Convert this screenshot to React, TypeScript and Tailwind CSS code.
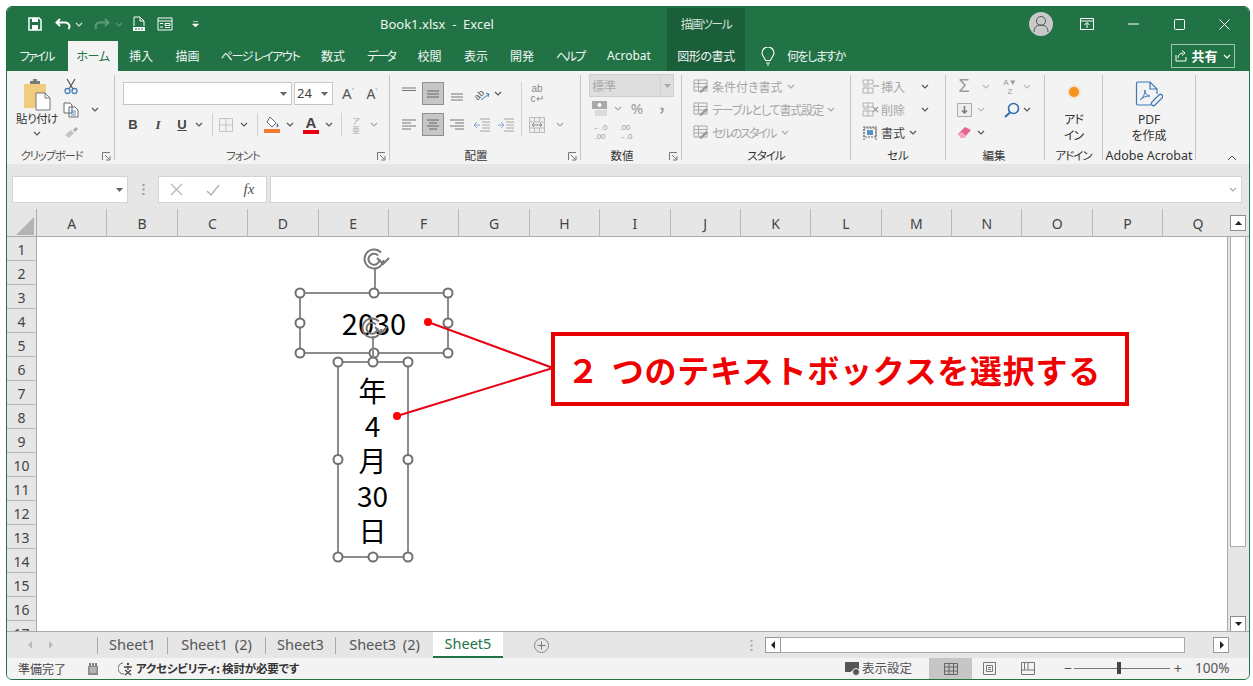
import React from "react";

const columns = ["A", "B", "C", "D", "E", "F", "G", "H", "I", "J", "K", "L", "M", "N", "O", "P", "Q"];
const rows = [1, 2, 3, 4, 5, 6, 7, 8, 9, 10, 11, 12, 13, 14, 15, 16, 17];

function Chev({ color = "#555" }: { color?: string }) {
  return (
    <svg width="8" height="5" viewBox="0 0 8 5">
      <path d="M1 1l3 3 3-3" fill="none" stroke={color} strokeWidth="1.2" />
    </svg>
  );
}

function Caret({ color = "#666", up }: { color?: string; up?: boolean }) {
  return (
    <svg width="7" height="4" viewBox="0 0 7 4">
      <path d={up ? "M0 4h7L3.5 0z" : "M0 0h7L3.5 4z"} fill={color} />
    </svg>
  );
}

function Launcher() {
  return (
    <svg width="9" height="9" viewBox="0 0 9 9">
      <path d="M.5 8V.5H8M3 3l4.5 4.5M4 8h4V4" fill="none" stroke="#777" strokeWidth="1" />
    </svg>
  );
}

function Lines({ kind, color = "#777" }: { kind: "l" | "c" | "r" | "t" | "m" | "b"; color?: string }) {
  const d: Record<string, string> = {
    l: "M1 3h14M1 6h9M1 9h14M1 12h9",
    c: "M2 3h12M4 6h8M2 9h12M4 12h8",
    r: "M1 3h14M6 6h9M1 9h14M6 12h9",
    t: "M1 2h14M1 4.5h14",
    m: "M2 5h12M2 8h12M2 11h12",
    b: "M2 8h12M2 11h12M2 14h12",
  };
  return (
    <svg width="16" height="16" viewBox="0 0 16 16">
      <path d={d[kind]} fill="none" stroke={color} strokeWidth="1" />
    </svg>
  );
}

function Group({ w, label, launcher, dark, labelClass = "", children }: { w: string; label: string; launcher?: boolean; dark?: boolean; labelClass?: string; children: React.ReactNode }) {
  return (
    <div className={`${w} h-[85px] shrink-0 border-r border-[#c6c6c6]`}>
      <div className="h-[72px] flow-root">{children}</div>
      <div className={`h-[18px] flex items-center relative ${launcher ? "pr-[18px]" : ""}`}>
        <span className={`w-full text-center text-[11.5px] whitespace-nowrap ${dark ? "text-[#333]" : "text-[#555]"} ${labelClass}`}>{label}</span>
        {launcher && (
          <span className="absolute right-[3px] top-[5px] flex">
            <Launcher />
          </span>
        )}
      </div>
    </div>
  );
}

function Slot({ className, children }: { className: string; children?: React.ReactNode }) {
  return <div className={`flex items-center justify-center shrink-0 ${className}`}>{children}</div>;
}

function StyleIcon() {
  return (
    <svg width="16" height="15" viewBox="0 0 16 15">
      <path d="M1 1h13v11H1zM1 4.5h13M1 8h13M5.5 1v11" fill="none" stroke="#a8a8a8" strokeWidth="1" />
      <path d="M6 13l7-7 2 2-7 6z" fill="#999" />
    </svg>
  );
}

function CellIcon({ kind }: { kind: "ins" | "del" | "fmt" }) {
  if (kind === "fmt") {
    return (
      <svg width="16" height="16" viewBox="0 0 16 16">
        <path d="M2 3h12v9H2zM2 1v14M14 1v14M5 1v2M8 1v2M11 1v2" fill="none" stroke="#666" strokeWidth="1" strokeDasharray="2 1" />
        <path d="M5 5h6v5H5z" fill="#5b8fc7" />
      </svg>
    );
  }
  return (
    <svg width="18" height="16" viewBox="0 0 18 16">
      <path d="M1 1h10v4H1zM1 9h10v5H1zM6 1v4M6 9v5M1 7h6" fill="none" stroke="#b0b0b0" strokeWidth="1" />
      {kind === "ins" ? <path d="M11 7h6" stroke="#b0b0b0" strokeWidth="1.5" /> : <path d="M11 5l5 5M16 5l-5 5" stroke="#999" strokeWidth="1.2" />}
    </svg>
  );
}

function Rotate({ x, y }: { x: number; y: number }) {
  return (
    <g transform={`translate(${x} ${y})`} fill="none" stroke="#777">
      <path d="M7 -6.500A9.500 9.500 0 1 0 9.500 1" strokeWidth="2" />
      <path d="M4 -3.500A5.500 5.500 0 1 0 5.500 0" strokeWidth="2" />
      <path d="M3 -1l6 6 6-6" strokeWidth="2" />
    </g>
  );
}

function Frame({ x, y, w, h }: { x: number; y: number; w: number; h: number }) {
  const pts = [
    [x, y],
    [x + w / 2, y],
    [x + w, y],
    [x, y + h / 2],
    [x + w, y + h / 2],
    [x, y + h],
    [x + w / 2, y + h],
    [x + w, y + h],
  ];
  return (
    <g>
      <rect x={x} y={y} width={w} height={h} fill="none" stroke="#8c8c8c" strokeWidth="2" />
      {pts.map((p, i) => (
        <circle key={i} cx={p[0]} cy={p[1]} r="4.5" fill="#fff" stroke="#707070" strokeWidth="2" />
      ))}
    </g>
  );
}

function Shapes() {
  return (
    <div className="absolute inset-0 pointer-events-none">
      <div className="absolute left-[300px] top-[293px] w-[148px] h-[60px] flex items-center justify-center text-[29px] leading-none text-black pb-[1px]">2030</div>
      <div className="absolute left-[338px] top-[373px] w-[70px] flex flex-col items-center text-[28px] leading-[35px] text-black pr-[1px]">
        <span>年</span>
        <span>4</span>
        <span>月</span>
        <span>30</span>
        <span>日</span>
      </div>
      <svg className="absolute left-0 top-0" width="1253" height="686" viewBox="0 0 1253 686">
        <path d="M375 268V293" stroke="#8c8c8c" strokeWidth="2" />
        <Rotate x={374} y={259} />
        <Frame x={300} y={293} w={148} h={60} />
        <path d="M373 336V362" stroke="#8c8c8c" strokeWidth="2" />
        <Rotate x={372} y={328} />
        <Frame x={338} y={362} w={70} h={195} />
        <path d="M428 322L553 368L397 416" fill="none" stroke="#e60012" strokeWidth="2" />
        <circle cx="428" cy="322" r="4" fill="#f00" />
        <circle cx="397" cy="416" r="4" fill="#f00" />
      </svg>
      <div className="absolute left-[551px] top-[332px] w-[578px] h-[74px] pr-[12px] bg-white border-[4px] border-[#e60000] flex items-center justify-center">
        <span className="text-[32px] leading-none font-bold tracking-[0.75px] text-[#f00000] whitespace-nowrap [font-feature-settings:normal]">
          <span className="mr-[12px]">２</span>つのテキストボックスを選択する
        </span>
      </div>
    </div>
  );
}

export default function App() {
  return (
    <div className="relative w-[1253px] h-[686px] bg-white overflow-hidden font-['Noto_Sans_CJK_JP','Noto_Sans',sans-serif] [font-feature-settings:'palt']">
      <div className="absolute left-[6px] top-[6px] w-[1244px] h-[674px] flex flex-col rounded-[6px] overflow-hidden border border-[#217346] bg-[#e6e6e6]">
        {/* title bar */}
        <div className="h-[34px] shrink-0 flex bg-[#217346] text-white items-center">
          <Slot className="w-[18px] h-[18px] ml-[19px]">
            <svg width="14" height="14" viewBox="0 0 14 14">
              <path d="M1 1h10l2 2v10H1z" fill="none" stroke="#fff" strokeWidth="1.5" />
              <path d="M4 1h6v4H4zM4 8h6v5H4z" fill="#fff" />
            </svg>
          </Slot>
          <Slot className="w-[18px] h-[18px] ml-[10px]">
            <svg width="16" height="13" viewBox="0 0 16 13">
              <path d="M5 1L1.5 4.5 5 8M2 4.5h8a4 4 0 0 1 3.5 6.5" fill="none" stroke="#fff" strokeWidth="2" />
            </svg>
          </Slot>
          <Slot className="w-[8px] ml-[3px]"><Chev color="#cfe3d7" /></Slot>
          <Slot className="w-[18px] h-[18px] ml-[10px]">
            <svg width="16" height="13" viewBox="0 0 16 13">
              <path d="M11 1l3.5 3.5L11 8M14 4.5H6A4 4 0 0 0 2.5 11" fill="none" stroke="#5d9a78" strokeWidth="2" />
            </svg>
          </Slot>
          <Slot className="w-[8px] ml-[4px]"><Chev color="#5d9a78" /></Slot>
          <Slot className="w-[18px] h-[18px] ml-[7px]">
            <svg width="14" height="16" viewBox="0 0 14 16">
              <path d="M2 10V1h6l4 4v5M8 1v4h4" fill="none" stroke="#fff" strokeWidth="1" />
              <path d="M1 11h12v4H1z" fill="#fff" />
              <path d="M3 13h2M6 13h2M9 13h2" stroke="#217346" strokeWidth="1" />
            </svg>
          </Slot>
          <Slot className="w-[18px] h-[18px] ml-[8px]">
            <svg width="16" height="14" viewBox="0 0 16 14">
              <path d="M1 1h14v12H1zM1 4h14M3 6.5h3M8 6.5h5v2H8zM3 10h3M8 10.5h5" fill="none" stroke="#fff" strokeWidth="1" />
            </svg>
          </Slot>
          <Slot className="w-[8px] ml-[17px]">
            <svg width="7" height="6" viewBox="0 0 7 6">
              <path d="M1 .5h5M0.5 3h6L3.5 6z" fill="#fff" stroke="#fff" strokeWidth=".6" />
            </svg>
          </Slot>
          <div className="w-[287px] ml-[181px] pt-[1px] text-[13px] whitespace-nowrap text-[#eef5f0] font-['Noto_Sans','Noto_Sans_CJK_JP',sans-serif]">Book1.xlsx&nbsp; -&nbsp; Excel</div>
          <div className="w-[78px] self-stretch mt-[1px] pb-[2px] bg-[#1b5e3a] flex items-center justify-center text-[12px] tracking-[-1.5px] text-[#d3e2d9]">描画ツール</div>
          <div className="w-[24px] h-[24px] ml-[284px] rounded-full bg-[#c9c9c9] flex items-center justify-center">
            <svg width="16" height="18" viewBox="0 0 16 18">
              <circle cx="8" cy="6" r="4.5" fill="none" stroke="#555" strokeWidth="1" />
              <path d="M1 17c0-5 3-7 7-7s7 2 7 7" fill="none" stroke="#555" strokeWidth="1" />
            </svg>
          </div>
          <Slot className="w-[20px] h-[20px] ml-[24px]">
            <svg width="14" height="12" viewBox="0 0 14 12">
              <path d="M.5 .5h13v11H.5zM.5 3h13" fill="none" stroke="#fff" strokeWidth="1" />
              <path d="M7 10V5M4.5 7L7 4.5 9.5 7" fill="none" stroke="#fff" strokeWidth="1" />
            </svg>
          </Slot>
          <Slot className="w-[20px] h-[20px] ml-[26px]">
            <svg width="11" height="2" viewBox="0 0 11 2"><path d="M0 1h11" stroke="#fff" strokeWidth="1" /></svg>
          </Slot>
          <Slot className="w-[20px] h-[20px] ml-[26px]">
            <svg width="11" height="11" viewBox="0 0 11 11"><rect x=".5" y=".5" width="10" height="10" rx="1" fill="none" stroke="#fff" strokeWidth="1" /></svg>
          </Slot>
          <Slot className="w-[20px] h-[20px] ml-[25px]">
            <svg width="11" height="11" viewBox="0 0 11 11"><path d="M.5 .5l10 10M10.5 .5l-10 10" stroke="#fff" strokeWidth="1" /></svg>
          </Slot>
        </div>

        {/* ribbon tabs */}
        <div className="h-[30px] shrink-0 flex items-center bg-[#217346] text-[12px] text-[#f2f7f4] whitespace-nowrap">
          <div className="w-[61px] text-center pr-[2px] tracking-[-2px]">ファイル</div>
          <div className="w-[50px] h-full flex items-center justify-center bg-[#f3f3f3] text-[#217346] tracking-[-0.5px]">ホーム</div>
          <div className="w-[46px] text-center">挿入</div>
          <div className="w-[46px] text-center pl-[1px]">描画</div>
          <div className="w-[100px] text-center tracking-[-1.3px]">ページ レイアウト</div>
          <div className="w-[46px] text-center">数式</div>
          <div className="w-[50px] text-center tracking-[-2px]">データ</div>
          <div className="w-[47px] text-center">校閲</div>
          <div className="w-[46px] text-center">表示</div>
          <div className="w-[46px] text-center">開発</div>
          <div className="w-[50px] text-center tracking-[-2px]">ヘルプ</div>
          <div className="w-[68px] text-center font-['Noto_Sans','Noto_Sans_CJK_JP',sans-serif]">Acrobat</div>
          <div className="w-[78px] h-full ml-[4px] flex items-center justify-center bg-[#1b5e3a] tracking-[-0.4px]">図形の書式</div>
          <Slot className="w-[16px] ml-[15px]">
            <svg width="14" height="19" viewBox="0 0 14 19">
              <path d="M4.5 13.5C4 10.5 1 9.5 1 6a6 6 0 0 1 12 0c0 3.500-3 4.500-3.500 7.500zM5 16h4M6 18h2" fill="none" stroke="#fff" strokeWidth="1.1" />
            </svg>
          </Slot>
          <div className="ml-[11px] tracking-[-1.5px]">何をしますか</div>
          <div className="ml-auto mr-[14px] w-[64px] h-[24px] border border-[#9cc5ad] flex items-center justify-center gap-[3px] text-white">
            <svg width="13" height="12" viewBox="0 0 13 12">
              <path d="M1 5v6h10V7M3 8c0-3 2-5 5-5M7 .5l3 2.500-3 2.500" fill="none" stroke="#fff" strokeWidth="1" />
            </svg>
            <span className="text-[13px] font-bold">共有</span>
            <span className="ml-[2px] flex"><Chev color="#fff" /></span>
          </div>
        </div>

        {/* ribbon */}
        <div className="h-[93px] shrink-0 flex pt-[4px] bg-[#f3f3f3] text-[12px] text-[#444]">
          <Group w="w-[108px]" label="クリップボード" launcher labelClass="tracking-[-1.3px]">
            <div className="flex">
              <div className="w-[52px] ml-[4px] pt-[4px] flex flex-col items-center">
                <svg width="28" height="32" viewBox="0 0 28 32">
                  <path d="M1 5h22v24H1z" fill="#f1cb7e" />
                  <path d="M7 5h10V2h-3V0h-4v2H7z" fill="#7a7a7a" />
                  <path d="M13 14h9l5 5v12H13z" fill="#fff" stroke="#777" strokeWidth="1" />
                  <path d="M22 14v5h5" fill="none" stroke="#777" strokeWidth="1" />
                </svg>
                <div className="h-[16px] mt-[-1px] text-[11.5px] leading-[16px] whitespace-nowrap tracking-[-0.5px] text-[#333]">貼り付け</div>
                <div className="mt-[5px] flex"><Chev /></div>
              </div>
              <div className="w-[16px] flex flex-col">
                <Slot className="h-[23px]">
                  <svg width="14" height="17" viewBox="0 0 14 17">
                    <path d="M3 1l6 10M11 1L5 11" stroke="#555" strokeWidth="1.2" />
                    <circle cx="3.500" cy="13" r="2.500" fill="none" stroke="#4a7ebb" strokeWidth="1.3" />
                    <circle cx="10.500" cy="13" r="2.500" fill="none" stroke="#4a7ebb" strokeWidth="1.3" />
                  </svg>
                </Slot>
                <Slot className="h-[23px]">
                  <svg width="16" height="16" viewBox="0 0 16 16">
                    <path d="M1 1h6l2 2v8H1zM6 5h6l3 3v7H6z" fill="#fff" stroke="#666" strokeWidth="1" />
                    <path d="M8 9h5M8 11h5M8 13h5" stroke="#5b8fc7" strokeWidth="1" />
                  </svg>
                </Slot>
                <Slot className="h-[23px]">
                  <svg width="15" height="13" viewBox="0 0 15 13">
                    <path d="M1 9l6-5 3 3-5 5z" fill="#c4c4c4" />
                    <path d="M9 4l3-3 2 2-3 3z" fill="#aaa" />
                  </svg>
                </Slot>
              </div>
              <Slot className="w-[12px] h-[23px] ml-[10px] mt-[23px]"><Chev /></Slot>
            </div>
          </Group>

          <Group w="w-[275px]" label="フォント" launcher labelClass="tracking-[-1px]">
            <div className="flex h-[23px] mt-[7px] ml-[8px]">
              <div className="w-[169px] bg-white border border-[#c6c6c6] flex items-center justify-end pr-[4px]"><Caret /></div>
              <div className="w-[39px] ml-[2px] bg-white border border-[#c6c6c6] flex items-center justify-between pl-[2px] pr-[4px] text-[13px] font-['Noto_Sans',sans-serif]">24<Caret /></div>
              <Slot className="w-[24px] ml-[3px]">
                <span className="text-[15px] font-['Noto_Sans',sans-serif] text-[#555]">A<sup className="text-[#4a7ebb] text-[8px]">˄</sup></span>
              </Slot>
              <Slot className="w-[24px]">
                <span className="text-[14px] font-['Noto_Sans',sans-serif] text-[#555]">A<sup className="text-[#4a7ebb] text-[8px]">˅</sup></span>
              </Slot>
            </div>
            <div className="flex h-[23px] mt-[8px] ml-[8px] items-center font-['Liberation_Sans',sans-serif]">
              <Slot className="w-[20px] font-bold text-[13px] text-[#444]">B</Slot>
              <Slot className="w-[20px] ml-[5px] font-['Liberation_Serif',serif] italic font-bold text-[13px] text-[#444]">I</Slot>
              <Slot className="w-[20px] ml-[4px] font-bold text-[13px] underline text-[#444]">U</Slot>
              <Slot className="w-[14px]"><Chev /></Slot>
              <div className="w-px h-[23px] ml-[6px] bg-[#d0d0d0]" />
              <Slot className="w-[20px] ml-[3px]">
                <svg width="14" height="14" viewBox="0 0 14 14"><path d="M.5 .5h13v13H.5zM7 .5v13M.5 7h13" fill="none" stroke="#c4c4c4" strokeWidth="1" /></svg>
              </Slot>
              <Slot className="w-[14px] ml-[1px]"><Chev /></Slot>
              <div className="w-px h-[23px] ml-[6px] bg-[#d0d0d0]" />
              <Slot className="w-[20px] ml-[4px]">
                <svg width="17" height="17" viewBox="0 0 17 17">
                  <path d="M6 1l6 6-4 4-5-5z" fill="#fff" stroke="#666" strokeWidth="1" />
                  <path d="M13 7c1.500 2 2 3 1 4s-2 0-1-4z" fill="#4a7ebb" />
                  <path d="M0 13h16v4H0z" fill="#ed7d31" />
                </svg>
              </Slot>
              <Slot className="w-[14px] ml-[1px]"><Chev /></Slot>
              <Slot className="w-[20px] ml-[4px]">
                <div className="flex flex-col items-center">
                  <span className="text-[15px] leading-[13px] font-bold text-[#444]">A</span>
                  <span className="w-[16px] h-[4px] bg-[#e60012] mt-[1px]" />
                </div>
              </Slot>
              <Slot className="w-[14px] ml-[1px]"><Chev /></Slot>
              <div className="w-px h-[23px] ml-[5px] bg-[#d0d0d0]" />
              <Slot className="w-[20px] ml-[4px] flex-col text-[8px] leading-[9px] text-[#aaa] font-['Noto_Sans_CJK_JP',sans-serif]">
                <span>ア</span>
                <span>亜</span>
              </Slot>
              <Slot className="w-[14px] ml-[1px]"><Chev color="#aaa" /></Slot>
            </div>
          </Group>

          <Group w="w-[191px]" label="配置" launcher dark>
            <div className="flex h-[23px] mt-[7px] ml-[8px]">
              <Slot className="w-[22px]"><Lines kind="t" /></Slot>
              <Slot className="w-[22px] ml-[2px] bg-[#c6c6c6] border border-[#8f8f8f]"><Lines kind="m" color="#666" /></Slot>
              <Slot className="w-[22px] ml-[2px]"><Lines kind="b" /></Slot>
              <Slot className="w-[20px] ml-[4px]">
                <svg width="18" height="16" viewBox="0 0 18 16">
                  <text x="1" y="12" fontSize="9" fill="#555" transform="rotate(-45 6 9)" fontFamily="Liberation Sans">ab</text>
                  <path d="M8 14l8-6M13 7l3 1-1 3" fill="none" stroke="#4a7ebb" strokeWidth="1" />
                </svg>
              </Slot>
              <Slot className="w-[12px]"><Chev /></Slot>
              <div className="w-px h-[54px] ml-[17px] bg-[#d0d0d0]" />
              <Slot className="w-[20px] ml-[5px] flex-col text-[10px] leading-[10px] text-[#8a8a8a] font-['Liberation_Sans',sans-serif]">
                <span>ab</span>
                <span>c↵</span>
              </Slot>
            </div>
            <div className="flex h-[23px] mt-[8px] ml-[8px]">
              <Slot className="w-[22px]"><Lines kind="l" /></Slot>
              <Slot className="w-[22px] ml-[2px] bg-[#c6c6c6] border border-[#8f8f8f]"><Lines kind="c" color="#666" /></Slot>
              <Slot className="w-[22px] ml-[2px]"><Lines kind="r" /></Slot>
              <Slot className="w-[20px] ml-[4px]">
                <svg width="16" height="14" viewBox="0 0 16 14"><path d="M6 1h10M8 4h8M8 7h8M8 10h8M6 13h10" stroke="#a5a5a5" strokeWidth="1" /><path d="M6 7H0M3 4L0 7l3 3" fill="none" stroke="#7ea6d1" strokeWidth="1" /></svg>
              </Slot>
              <Slot className="w-[20px] ml-[4px]">
                <svg width="16" height="14" viewBox="0 0 16 14"><path d="M6 1h10M8 4h8M8 7h8M8 10h8M6 13h10" stroke="#a5a5a5" strokeWidth="1" /><path d="M0 7h6M3 4l3 3-3 3" fill="none" stroke="#7ea6d1" strokeWidth="1" /></svg>
              </Slot>
              <div className="w-px ml-[5px]" />
              <Slot className="w-[20px] ml-[5px]">
                <svg width="16" height="16" viewBox="0 0 16 16"><path d="M.5 .5h15v15H.5zM.5 5h15M.5 11h15M5.500 .5V5M10.500 .5V5M5.500 11v4.500M10.500 11v4.500" fill="#eee" stroke="#bbb" strokeWidth="1" /><path d="M3 8h10M5 6L3 8l2 2M11 6l2 2-2 2" fill="none" stroke="#8a8a8a" strokeWidth="1" /></svg>
              </Slot>
              <Slot className="w-[12px] ml-[7px]"><Chev color="#aaa" /></Slot>
            </div>
          </Group>

          <Group w="w-[101px]" label="数値" launcher dark>
            <div className="w-[85px] h-[23px] ml-[8px] mt-[-1px] bg-[#dedede] border border-[#cfcfcf] flex items-center justify-between pl-[2px] text-[#aaa]">
              標準
              <span className="w-[13px] h-full border-l border-[#cfcfcf] flex items-center justify-center"><Caret color="#aaa" /></span>
            </div>
            <div className="flex h-[23px] items-center text-[#9a9a9a]">
              <Slot className="w-[20px] ml-[9px]">
                <svg width="16" height="15" viewBox="0 0 16 15"><path d="M0 0h15v8H0z" fill="#a9a9a9" /><circle cx="7.500" cy="4" r="2" fill="#fff" /><path d="M3 10h12M3 12h12M3 14h12" stroke="#c4c4c4" strokeWidth="1" /></svg>
              </Slot>
              <Slot className="w-[12px] ml-[2px]"><Chev color="#aaa" /></Slot>
              <Slot className="w-[20px] ml-[3px] text-[15px] font-['Noto_Sans',sans-serif]">%</Slot>
              <Slot className="w-[14px] ml-[8px] font-bold text-[15px] pb-[8px]">,</Slot>
            </div>
            <div className="flex h-[23px] items-center text-[8px] leading-[9px] text-[#999] font-['Liberation_Sans',sans-serif]">
              <Slot className="w-[20px] ml-[9px] flex-col"><span>←.0</span><span>.00</span></Slot>
              <Slot className="w-[20px] ml-[5px] flex-col"><span>.00</span><span>→.0</span></Slot>
            </div>
          </Group>

          <Group w="w-[169px]" label="スタイル" dark labelClass="tracking-[-1px]">
            <div className="flex flex-col ml-[11px] text-[#a6a6a6]">
              <div className="flex h-[23px] items-center gap-[3px] whitespace-nowrap"><StyleIcon />条件付き書式<span className="flex ml-[1px]"><Chev color="#aaa" /></span></div>
              <div className="flex h-[23px] items-center gap-[3px] whitespace-nowrap"><StyleIcon /><span className="tracking-[-1.1px]">テーブルとして書式設定</span><span className="flex ml-[1px]"><Chev color="#aaa" /></span></div>
              <div className="flex h-[23px] items-center gap-[3px] whitespace-nowrap"><StyleIcon /><span className="tracking-[-2px]">セルのスタイル</span><span className="flex ml-[3px]"><Chev color="#aaa" /></span></div>
            </div>
          </Group>

          <Group w="w-[95px]" label="セル" dark>
            <div className="flex flex-col ml-[11px]">
              <div className="flex h-[23px] items-center text-[#a6a6a6] whitespace-nowrap"><span className="w-[19px] flex"><CellIcon kind="ins" /></span>挿入<span className="flex ml-[16px]"><Chev /></span></div>
              <div className="flex h-[23px] items-center text-[#a6a6a6] whitespace-nowrap"><span className="w-[19px] flex"><CellIcon kind="del" /></span>削除<span className="flex ml-[16px]"><Chev /></span></div>
              <div className="flex h-[23px] items-center text-[#444] whitespace-nowrap"><span className="w-[19px] flex"><CellIcon kind="fmt" /></span>書式<span className="flex ml-[4px]"><Chev /></span></div>
            </div>
          </Group>

          <Group w="w-[99px]" label="編集" dark labelClass="pr-[2px]">
            <div className="flex h-[23px] items-center">
              <Slot className="w-[18px] ml-[9px] text-[18px] text-[#999] font-['Liberation_Sans',sans-serif]">Σ</Slot>
              <Slot className="w-[12px] ml-[7px]"><Chev color="#bbb" /></Slot>
              <Slot className="w-[18px] ml-[9px] text-[8px] leading-[9px] flex-col text-[#999] font-['Liberation_Sans',sans-serif]"><span>A▼</span><span>Z</span></Slot>
              <Slot className="w-[12px] ml-[2px]"><Chev color="#bbb" /></Slot>
            </div>
            <div className="flex h-[23px] items-center">
              <Slot className="w-[18px] ml-[9px]">
                <svg width="15" height="14" viewBox="0 0 15 14"><path d="M.5 .5h14v13H.5z" fill="#eee" stroke="#aaa" strokeWidth="1" /><path d="M7.500 3v7M5 7.500l2.500 2.500L10 7.500" fill="none" stroke="#777" strokeWidth="1.500" /></svg>
              </Slot>
              <Slot className="w-[12px] ml-[2px]"><Chev color="#bbb" /></Slot>
              <Slot className="w-[18px] ml-[16px]">
                <svg width="16" height="16" viewBox="0 0 16 16"><circle cx="9.500" cy="6.500" r="5" fill="none" stroke="#2f6db0" strokeWidth="1.600" /><path d="M6 10.500L1 15" stroke="#2f6db0" strokeWidth="2" /></svg>
              </Slot>
              <Slot className="w-[12px]"><Chev /></Slot>
            </div>
            <div className="flex h-[23px] items-center">
              <Slot className="w-[18px] ml-[9px]">
                <svg width="15" height="13" viewBox="0 0 15 13"><path d="M1 8l7-7 6 3-7 8H4z" fill="#e8648c" /><path d="M1 8l3 4h3l2-2-4-4z" fill="#f3a8be" /></svg>
              </Slot>
              <Slot className="w-[12px] ml-[2px]"><Chev /></Slot>
            </div>
          </Group>

          <Group w="w-[58px]" label="アドイン" dark labelClass="tracking-[-1px]">
            <div className="flex flex-col items-center pt-[12px] text-[#333]">
              <span className="w-[10px] h-[10px] rounded-full bg-[#f7941d] shadow-[0_0_3px_#f7b26a]" />
              <span className="mt-[14px] leading-[16px] tracking-[-1px]">アド</span>
              <span className="leading-[16px] tracking-[-1px]">イン</span>
            </div>
          </Group>

          <Group w="w-[93px]" label="Adobe Acrobat" dark labelClass="text-[12.5px] font-['Noto_Sans',sans-serif]">
            <div className="flex flex-col items-center pt-[6px] text-[#333]">
              <svg width="28" height="28" viewBox="0 0 28 28">
                <path d="M16 24H3a1.500 1.500 0 0 1-1.500-1.500v-20A1.500 1.500 0 0 1 3 1h12l7 7v5M15 1v7h7" fill="none" stroke="#3f79b8" strokeWidth="1.200" />
                <path d="M5 19c3-2 5-6 5-10 0 3 2 6 5 6-4 0-7 1-10 4z" fill="none" stroke="#3f79b8" strokeWidth="1" />
                <path d="M17 21l7-7a2 2 0 0 1 3 3l-7 7a2 2 0 0 1-3-3z" fill="none" stroke="#3f79b8" strokeWidth="1.200" />
              </svg>
              <span className="mt-[3px] leading-[15px] font-['Noto_Sans',sans-serif]">PDF</span>
              <span className="leading-[15px]">を作成</span>
            </div>
          </Group>

          <div className="flex-1 flex justify-end items-end h-[85px] pr-[12px]">
            <svg width="10" height="6" viewBox="0 0 10 6" className="mb-[-1px]"><path d="M1 5l4-4 4 4" fill="none" stroke="#555" strokeWidth="1" /></svg>
          </div>
        </div>

        {/* formula bar */}
        <div className="h-[45px] shrink-0 flex items-start pt-[12px] pl-[5px] bg-[#e6e6e6]">
          <div className="w-[116px] h-[27px] bg-white border border-[#d4d4d4] flex items-center justify-end pr-[4px]"><Caret /></div>
          <Slot className="w-[30px] h-[27px]">
            <svg width="3" height="11" viewBox="0 0 3 11"><path d="M1.500 0v2M1.500 4.500v2M1.500 9v2" stroke="#999" strokeWidth="2" /></svg>
          </Slot>
          <div className="w-[109px] h-[27px] bg-white border border-[#d4d4d4] flex items-center">
            <Slot className="w-[36px] pr-[1px]">
              <svg width="13" height="13" viewBox="0 0 13 13"><path d="M1 1l11 11M12 1L1 12" stroke="#b5b5b5" strokeWidth="1.200" /></svg>
            </Slot>
            <Slot className="w-[36px]">
              <svg width="14" height="12" viewBox="0 0 14 12"><path d="M1 7l4 4 8-10" fill="none" stroke="#b5b5b5" strokeWidth="1.500" /></svg>
            </Slot>
            <Slot className="w-[36px] font-['Liberation_Serif',serif] italic text-[15px] text-[#555]">fx</Slot>
          </div>
          <div className="w-[972px] h-[27px] ml-[3px] bg-white border border-[#d4d4d4] flex items-center justify-end pr-[4px]"><Chev color="#aaa" /></div>
        </div>

        {/* column headers */}
        <div className="h-[28px] shrink-0 flex bg-[#e6e6e6] border-b border-[#ababab]">
          <div className="w-[30px] shrink-0 flex items-end justify-end pr-[2px] pb-[1px] border-r border-[#ababab]">
            <svg width="18" height="18" viewBox="0 0 18 18"><path d="M0 18L18 0v18z" fill="#b4b4b4" /></svg>
          </div>
          <div className="w-[1191px] overflow-hidden flex">
            {columns.map((c) => (
              <div key={c} className="w-[70.4px] shrink-0 pt-[1px] border-r border-[#b9b9b9] flex items-center justify-center text-[14px] text-[#444] font-['Noto_Sans',sans-serif]">{c}</div>
            ))}
          </div>
          <div className="flex-1 flex justify-start pl-[2px] pt-[6px]">
            <div className="w-[16px] h-[16px] bg-white border border-[#8f8f8f] flex items-center justify-center"><Caret color="#222" up /></div>
          </div>
        </div>

        {/* grid */}
        <div className="h-[394px] shrink-0 flex bg-white">
          <div className="w-[30px] shrink-0 overflow-hidden bg-[#e6e6e6] border-r border-[#ababab]">
            {rows.map((r) => (
              <div key={r} className="h-[24px] pt-[1px] border-b border-[#b9b9b9] flex items-center justify-center text-[14px] text-[#444] font-['Noto_Sans',sans-serif]">{r}</div>
            ))}
          </div>
          <div className="w-[1191px] shrink-0 bg-white border-r border-[#ababab]" />
          <div className="flex-1 flex flex-col items-start pl-[2px] bg-[#e6e6e6]">
            <div className="w-[16px] h-[310px] bg-white border border-[#ababab] border-t-0" />
            <div className="w-[16px] h-[16px] mt-auto mb-[-1px] bg-white border border-[#8f8f8f] flex items-center justify-center"><Caret color="#222" /></div>
          </div>
        </div>

        {/* sheet tabs */}
        <div className="h-[27px] shrink-0 flex items-center bg-[#e6e6e6] border-t border-[#ababab] text-[14.5px] [word-spacing:3px] text-[#555] font-['Noto_Sans',sans-serif] whitespace-nowrap">
          <Slot className="w-[10px] ml-[18px]">
            <svg width="5" height="8" viewBox="0 0 5 8"><path d="M4 0v8L0 4z" fill="#b9b9b9" /></svg>
          </Slot>
          <Slot className="w-[10px] ml-[10px]">
            <svg width="5" height="8" viewBox="0 0 5 8"><path d="M1 0v8l4-4z" fill="#b9b9b9" /></svg>
          </Slot>
          <div className="w-px h-[17px] ml-[42px] bg-[#aaa]" />
          <div className="w-[69px] text-center">Sheet1</div>
          <div className="w-px h-[17px] bg-[#aaa]" />
          <div className="w-[97px] text-center">Sheet1 (2)</div>
          <div className="w-px h-[17px] bg-[#aaa]" />
          <div className="w-[69px] text-center">Sheet3</div>
          <div className="w-px h-[17px] bg-[#aaa]" />
          <div className="w-[97px] text-center">Sheet3 (2)</div>
          <div className="w-[70px] h-full bg-white border-b-2 border-[#217346] text-[#217346] flex items-center justify-center">Sheet5</div>
          <Slot className="w-[16px] ml-[30px]">
            <svg width="15" height="15" viewBox="0 0 15 15"><circle cx="7.500" cy="7.500" r="7" fill="none" stroke="#888" strokeWidth="1" /><path d="M7.500 3.500v8M3.500 7.500h8" stroke="#777" strokeWidth="1" /></svg>
          </Slot>
          <Slot className="w-[3px] ml-[201px]">
            <svg width="3" height="11" viewBox="0 0 3 11"><path d="M1.500 0v2M1.500 4.500v2M1.500 9v2" stroke="#aaa" strokeWidth="2" /></svg>
          </Slot>
          <div className="w-[16px] h-[16px] ml-[12px] bg-white border border-[#999] flex items-center justify-center">
            <svg width="5" height="8" viewBox="0 0 5 8"><path d="M4 0v8L0 4z" fill="#222" /></svg>
          </div>
          <div className="w-[404px] h-[16px] bg-white border border-[#aaa] border-l-0" />
          <div className="w-[16px] h-[16px] ml-[28px] bg-white border border-[#999] flex items-center justify-center">
            <svg width="5" height="8" viewBox="0 0 5 8"><path d="M1 0v8l4-4z" fill="#222" /></svg>
          </div>
        </div>

        {/* status bar */}
        <div className="flex-1 flex items-center bg-[#f3f3f3] text-[12px] text-[#444] whitespace-nowrap">
          <div className="ml-[11px] w-[48px]">準備完了</div>
          <Slot className="w-[14px] ml-[20px]">
            <svg width="12" height="12" viewBox="0 0 12 12"><path d="M1 3h10v9H1z" fill="#8a8a8a" /><path d="M3 0v3M6 0v3M9 0v3" stroke="#555" strokeWidth="1.500" /><path d="M2.500 5h7M2.500 7h7M2.500 9h7" stroke="#ddd" strokeWidth="1" /></svg>
          </Slot>
          <Slot className="w-[16px] ml-[17px]">
            <svg width="15" height="14" viewBox="0 0 15 14"><path d="M5 1A5.500 5.500 0 0 0 6 12" fill="none" stroke="#666" strokeWidth="1" /><circle cx="10" cy="2" r="1.200" fill="#444" /><path d="M6 5h8M10 4v4M7 13l6-5M13 13L7 8" stroke="#444" strokeWidth="1.300" /></svg>
          </Slot>
          <div className="ml-[3px] font-bold text-[#333] w-[165px] text-[11.5px] tracking-[-0.2px]">アクセシビリティ: 検討が必要です</div>
          <Slot className="w-[16px] ml-[544px]">
            <svg width="16" height="14" viewBox="0 0 16 14"><path d="M0 0h14v10H9v-1H6v1H0z" fill="#555" /><circle cx="11" cy="10" r="3.500" fill="#555" stroke="#f3f3f3" strokeWidth="1" /></svg>
          </Slot>
          <div className="ml-[1px] w-[67px] text-[12.5px] text-[#555]">表示設定</div>
          <div className="w-[43px] h-full bg-[#c6c6c6] flex items-center justify-center">
            <svg width="14" height="12" viewBox="0 0 14 12"><path d="M.5 .5h13v11H.5zM.5 4h13M.5 8h13M5 .5v11M9.500 .5v11" fill="none" stroke="#666" strokeWidth="1" /></svg>
          </div>
          <Slot className="w-[14px] ml-[10px]">
            <svg width="13" height="13" viewBox="0 0 13 13"><path d="M.5 .5h12v12H.5zM3.500 3.500h6v6h-6zM5 5.500h3M5 7.500h3" fill="none" stroke="#777" strokeWidth="1" /></svg>
          </Slot>
          <Slot className="w-[14px] ml-[25px]">
            <svg width="14" height="13" viewBox="0 0 14 13"><path d="M.5 .5h13v12H.5zM.5 8h13M7 .5V8M3.500 .5V8" fill="none" stroke="#777" strokeWidth="1" /></svg>
          </Slot>
          <div className="ml-[28px] text-[14px] text-[#555] w-[10px] text-center">−</div>
          <div className="relative ml-[1px] w-[96px] h-[1px] bg-[#777]">
            <span className="absolute left-[43px] top-[-6px] w-[4px] h-[12px] bg-[#444]" />
          </div>
          <div className="ml-[3px] text-[14px] text-[#555] w-[10px] text-center">+</div>
          <div className="ml-[12px] text-[13.5px] text-[#555] font-['Noto_Sans',sans-serif]">100%</div>
        </div>
      </div>
      <Shapes />
    </div>
  );
}
